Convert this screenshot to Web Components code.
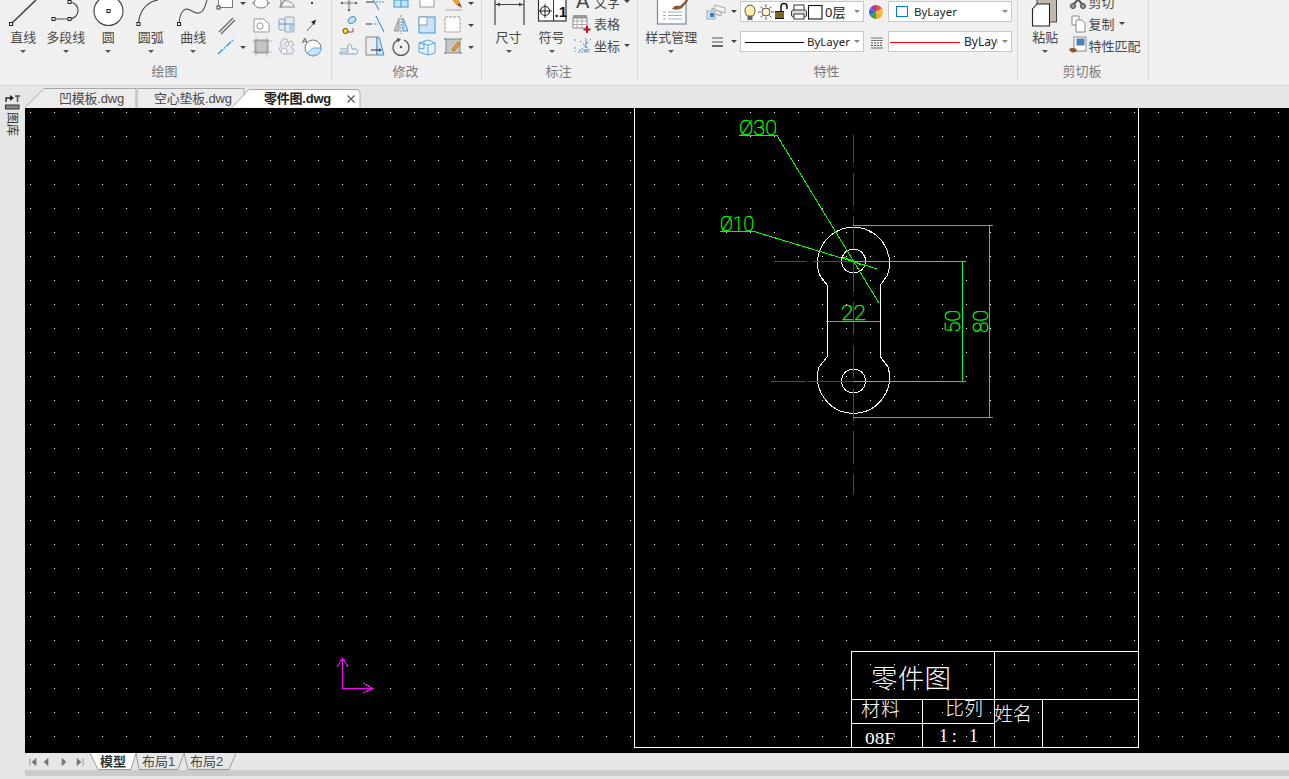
<!DOCTYPE html>
<html lang="zh"><head><meta charset="utf-8"><title>CAD</title>
<style>
html,body{margin:0;padding:0;width:1289px;height:779px;overflow:hidden;background:#e6e6e6}
body{font-family:"Noto Sans","Noto Sans CJK SC",sans-serif;font-size:13px;color:#4a4a4a}
.by{color:#222;font-size:11.5px}
</style></head><body>
<x-app>
  <x-ribbon slot="ribbon">
    <x-group title="绘图" style="width:332px">
      <div style="display:flex;padding-left:2px">
        <x-tool label="直线" icon="line"></x-tool>
        <x-tool label="多段线" icon="pline"></x-tool>
        <x-tool label="圆" icon="circle"></x-tool>
        <x-tool label="圆弧" icon="arc"></x-tool>
        <x-tool label="曲线" icon="spline"></x-tool>
        <x-grid style="--cols:22px 12px 24px 28px 22px">
          <x-ico name="rect"></x-ico><x-caret></x-caret><x-ico name="ellipse"></x-ico><x-ico name="polar"></x-ico><x-ico name="point"></x-ico>
          <x-ico name="dline"></x-ico><span></span><x-ico name="region"></x-ico><x-ico name="solid"></x-ico><x-ico name="arrow"></x-ico>
          <x-ico name="xline"></x-ico><x-caret></x-caret><x-ico name="hatch"></x-ico><x-ico name="gear"></x-ico><x-ico name="sector"></x-ico>
        </x-grid>
      </div>
    </x-group>
    <x-group title="修改" style="width:150px">
      <div style="padding-left:4px">
        <x-grid style="--cols:26px 26px 26px 26px 26px 10px">
          <x-ico name="move"></x-ico><x-ico name="trim"></x-ico><x-ico name="array"></x-ico><x-ico name="box"></x-ico><x-ico name="pencil"></x-ico><x-caret></x-caret>
          <x-ico name="fillet"></x-ico><x-ico name="extend"></x-ico><x-ico name="mirror"></x-ico><x-ico name="offset"></x-ico><x-ico name="dashbox"></x-ico><x-caret></x-caret>
          <x-ico name="stretch"></x-ico><x-ico name="trap"></x-ico><x-ico name="rotate"></x-ico><x-ico name="cubes"></x-ico><x-ico name="hatchedit"></x-ico><x-caret></x-caret>
        </x-grid>
      </div>
    </x-group>
    <x-group title="标注" style="width:156px">
      <div style="display:flex;padding-left:5px">
        <x-tool label="尺寸" icon="dim" style="width:43px"></x-tool>
        <x-tool label="符号" icon="sym" style="width:43px"></x-tool>
        <x-stack style="margin-left:-1px">
          <x-small icon="textA" label="文字" caret></x-small>
          <x-small icon="table" label="表格"></x-small>
          <x-small icon="coord" label="坐标" caret></x-small>
        </x-stack>
      </div>
    </x-group>
    <x-group title="特性" style="width:380px">
      <div style="display:flex;padding-left:12px">
        <x-tool label="样式管理" icon="style"></x-tool>
        <x-props style="margin-left:13.5px">
          <x-ico name="layers"></x-ico><x-caret></x-caret>
          <x-combo>
            <x-ico name="bulb" w="16" h="20" style="margin-left:1px"></x-ico><x-ico name="sun" w="16" h="20"></x-ico><x-ico name="lock" w="16" h="20"></x-ico><x-ico name="printer" w="18" h="20"></x-ico><x-ico name="square" w="15" h="20"></x-ico><span style="margin-left:2px;font-size:13px;color:#222">0层</span>
          </x-combo>
          <x-ico name="wheel" w="24"></x-ico>
          <x-combo>
            <x-ico name="bluebox" w="25" h="20"></x-ico><span class="by">ByLayer</span>
          </x-combo>
          <x-ico name="lweight"></x-ico><x-caret></x-caret>
          <x-combo>
            <x-ico name="blackline" w="66" h="20"></x-ico><span class="by">ByLayer</span>
          </x-combo>
          <x-ico name="ltype" w="24"></x-ico>
          <x-combo>
            <x-ico name="redline" w="75" h="20"></x-ico><span class="by" style="font-size:12px">ByLayer</span>
          </x-combo>
        </x-props>
      </div>
    </x-group>
    <x-group title="剪切板" style="width:131px">
      <div style="display:flex;padding-left:6px">
        <x-tool label="粘贴" icon="paste"></x-tool>
        <x-stack>
          <x-small icon="cut" label="剪切"></x-small>
          <x-small icon="copy" label="复制" caret></x-small>
          <x-small icon="match" label="特性匹配"></x-small>
        </x-stack>
      </div>
    </x-group>
  </x-ribbon>
  <x-sidebar slot="side"></x-sidebar>
  <x-tabs slot="tabs">
    <x-tab w="112" pad="34">凹模板.dwg</x-tab>
    <x-tab w="108" pad="17">空心垫板.dwg</x-tab>
    <x-tab w="129" pad="32" active style="margin-left:-13px">零件图.dwg</x-tab>
  </x-tabs>
  <x-canvas slot="canvas"></x-canvas>
  <x-layouts slot="layouts"></x-layouts>
</x-app>
<script>
const G='#6f6f6f',B='#3a97dd',L='#c9e4f8';
const sq=(x,y,s=3,c='#222')=>`<rect x="${x-s/2}" y="${y-s/2}" width="${s}" height="${s}" fill="#fff" stroke="${c}"/>`;
const ICONS={
line:`<path d="M9 24L34 0" stroke="#444" stroke-width="1.6"/>${sq(9,24)}`,
pline:`<path d="M8.5 19H24.5A8.5 8.5 0 0 0 24.5 2" fill="none" stroke="#444" stroke-width="1.1"/>${sq(8.5,19)}${sq(24.5,19)}${sq(24.5,2)}`,
circle:`<circle cx="21.5" cy="11" r="14.5" fill="#fff" stroke="#444" stroke-width="1.1"/>${sq(21.5,11)}`,
arc:`<path d="M8.5 24C9 12 16 2 28 0" fill="none" stroke="#444" stroke-width="1.2"/>${sq(8.5,24)}`,
spline:`<path d="M7 24C8 9 14 7 20 11C28 16 32 12 35 0" fill="none" stroke="#555" stroke-width="1.1"/>${sq(7,24)}`,
rect:`<rect x="3.5" y="1" width="14" height="14.5" fill="#fff" stroke="#777"/>${sq(3.5,15.5,3,'#444')}`,
ellipse:`<ellipse cx="11" cy="11" rx="7" ry="5" fill="#fff" stroke="#777"/><path d="M2 11h2M18 11h2" stroke="#777"/>`,
polar:`<path d="M5 16V4M3 15H19M5 14C5 6 15 8 18 14" fill="none" stroke="#888"/><path d="M5 14L11 4" stroke="#888"/>`,
point:`<rect x="10" y="10" width="2" height="2" fill="#444"/>`,
dline:`<path d="M4 18L18 4M6 20L20 6" stroke="#666" stroke-width="1.3"/>`,
region:`<path d="M4 5H14L19 10V18H4Z" fill="#fff" stroke="#999"/><circle cx="10" cy="12" r="3.2" fill="none" stroke="#999"/>`,
solid:`<rect x="3" y="5" width="6" height="11" rx="1" fill="#e6edf4" stroke="#9aa8b6"/><rect x="9" y="3" width="9" height="15" rx="1" fill="#e6ebf1" stroke="#9aa8b6"/><rect x="13" y="11" width="5" height="7" fill="#b5cce4"/><path d="M3 10H18" stroke="#4a98d8"/>`,
arrow:`<path d="M6 17L12 10" stroke="#666"/><path d="M10 8L15 5.5L13.5 11Z" fill="#222"/>`,
xline:`<path d="M3 18L18 4" stroke="${B}" stroke-width="1.4" stroke-dasharray="7 1 2 1"/>`,
hatch:`<rect x="5" y="4" width="13" height="13" fill="#c6c6c6" stroke="#999"/><path d="M2 5h20M2 16h20M6 1v20M17 1v20" stroke="#888" stroke-width=".5"/>`,
gear:`<path d="M7 3h4l1 3 4-1 2 4-3 2 3 3-2 4H7L5 16l-2-4 3-2-2-3z" fill="#e8ebf0" stroke="#aab2bb"/><circle cx="8" cy="15" r="3" fill="#fff" stroke="#aab2bb"/><circle cx="11" cy="8" r="2" fill="#fff" stroke="#aab2bb"/>`,
sector:`<circle cx="12" cy="12" r="8" fill="#fff" stroke="#777"/><path d="M12 12H20A8 8 0 0 1 6 17Z" fill="${L}" stroke="#6ab0e4"/><text x="1" y="7" font-size="8" fill="#444" font-family="Liberation Sans">A</text>`,
move:`<path d="M11 3V19M3 11H19" stroke="#888"/><circle cx="11" cy="11" r="2" fill="#999"/><path d="M9.5 5l1.5-3 1.5 3zM9.5 17l1.5 3 1.5-3zM5 9.5l-3 1.5 3 1.5zM17 9.5l3 1.5-3 1.5z" fill="#666"/>`,
trim:`<path d="M2 10H10" stroke="#555" stroke-width="1.2"/><path d="M12 10H20" stroke="${B}" stroke-dasharray="2 1"/><path d="M6 2L15 18" stroke="${B}" stroke-width="1.1"/>`,
array:`<rect x="4" y="1" width="14" height="14" fill="${L}" stroke="${B}"/><rect x="5" y="2" width="5" height="6" fill="#fff"/><path d="M11 1V15M4 8H18" stroke="${B}"/>`,
box:`<rect x="4" y="2" width="14" height="13" fill="#fff" stroke="#999"/>`,
pencil:`<path d="M5 1L15 13L18 11L8 -1Z" fill="#f0a830" stroke="#d08820"/><path d="M15 13l3-2 2 5z" fill="#8a4a30"/><path d="M3 18H20" stroke="#aaa"/>`,
fillet:`<circle cx="7.5" cy="17" r="2.5" fill="#ffe000" stroke="#444"/><ellipse cx="14" cy="6" rx="4" ry="3" fill="${L}" stroke="${B}" transform="rotate(-35 14 6)"/><path d="M10 18H15V14" fill="none" stroke="#a44"/>`,
extend:`<path d="M2 10H8" stroke="#555" stroke-width="1.2"/><path d="M10 10H14" stroke="${B}" stroke-dasharray="2 1"/><path d="M12 2L20 18" stroke="${B}" stroke-width="1.1"/>`,
mirror:`<path d="M9 4L4 17H9Z" fill="#c4c4c4" stroke="#999"/><path d="M13 4L18 17H13Z" fill="${L}" stroke="${B}"/><path d="M11 1V20" stroke="#888" stroke-dasharray="2 1"/>`,
offset:`<rect x="3" y="3" width="16" height="16" fill="${L}" stroke="${B}"/><rect x="3" y="3" width="8" height="8" fill="#fff" stroke="#999"/>`,
dashbox:`<rect x="3" y="3" width="15" height="15" fill="#fff" stroke="#999" stroke-dasharray="3 1"/>`,
stretch:`<path d="M2 16H10C10 12 9 9 11 8C13 7 14 11 14 13H18C20 13 20 18 18 18H2Z" fill="#f2f4fa" stroke="#7f9fbc"/><path d="M2 13H9" stroke="#7f9fbc"/>`,
trap:`<rect x="2" y="1" width="11" height="18" fill="#ececec" stroke="#888"/><path d="M13 1H15L20 19H13Z" fill="${L}" stroke="${B}"/><path d="M7 14H16" stroke="#333"/><path d="M15 12.5l3 1.5-3 1.5z" fill="#333"/>`,
rotate:`<path d="M8 4A8 8 0 1 0 14 4" fill="none" stroke="#555" stroke-width="1.2"/><path d="M6.5 2l4.5 1-3 3.5z" fill="#555"/><circle cx="11" cy="11" r="1.2" fill="#555"/>`,
cubes:`<path d="M3 7L12 4L19 7V17L12 19L3 16Z" fill="#e8f3fc" stroke="#5aa4dc"/><path d="M3 7L12 9V19M12 9L19 7M8 5V13L3 12" fill="none" stroke="#5aa4dc"/>`,
hatchedit:`<rect x="4" y="3" width="14" height="14" fill="#c6c6c6" stroke="#888"/><path d="M2 3h2M2 17h2M18 3h2M18 17h2" stroke="#666"/><path d="M10 14L16 6L18 8L12 15Z" fill="#f0a830" stroke="#a06a20"/>`,
dim:`<path d="M7 0V25M36 0V25" stroke="#444" stroke-width="1.2"/><path d="M7 4.5H36" stroke="#444"/><path d="M8 4.5l4-2v4zM35 4.5l-4-2v4z" fill="#444"/>`,
sym:`<rect x="7.5" y="-1" width="27.5" height="22" fill="#fff" stroke="#333" stroke-width="1.2"/><path d="M22.5 -1V21" stroke="#333"/><circle cx="14" cy="11" r="4.5" fill="none" stroke="#222" stroke-width="1.2"/><path d="M7 11H21M14 4V18" stroke="#222"/><text x="23.5" y="17" font-size="15" font-weight="700" fill="#111" font-family="Liberation Sans">.1</text>`,
style:`<rect x="7.5" y="-2" width="28.5" height="26" fill="#fff" stroke="#7a93aa" stroke-width="1.3"/><path d="M13 12H16M18 12H32M13 15.5H16M18 15.5H32M13 19H16M18 19H32" stroke="#9cb2c6"/><path d="M22 9C24 5 28 5 30 6L37 -1L38 1L32 8C29 10 25 10 22 9Z" fill="#8a5a34"/>`,
textA:`<text x="4" y="17" font-size="20" fill="#444" font-family="Liberation Sans">A</text>`,
table:`<rect x="1" y="2" width="14" height="3" fill="#999"/><rect x="1" y="5" width="14" height="10" fill="#fff" stroke="#888"/><path d="M1 8H15M1 11.5H15M5 5V15M10 5V15" stroke="#aaa"/><path d="M15 13V20M11.5 16.5H18.5" stroke="#c01020" stroke-width="2"/>`,
coord:`<path d="M3 5V9M3 13V18M7 16H19M14 4V18M8 7L18 16M19 5L9 16" stroke="${B}" stroke-dasharray="2 2" fill="none"/><path d="M6 18H18M14 6V18" stroke="#888" stroke-dasharray="2 1"/>`,
layers:`<path d="M9 4L19 7V12L9 9Z" fill="#f4f4f4" stroke="#aaa"/><path d="M6 7L15 11V15L6 12Z" fill="#e8e8e8" stroke="#aaa"/><rect x="1" y="10" width="8" height="8" fill="#d7e4f0" stroke="#9ab"/><rect x="4" y="12" width="4" height="4" fill="#3a7ec0"/>`,
bulb:`<path d="M5 14C2 10 2 4 8 3C14 4 14 10 11 14Z" fill="#ffefae" stroke="#555"/><rect x="5.5" y="14" width="5" height="4" fill="#666"/>`,
sun:`<circle cx="8" cy="10" r="4" fill="#fff5c8" stroke="#555"/><path d="M8 2V5M8 15V18M0 10H3M13 10H16M2.5 4.5L4.5 6.5M11.5 13.5L13.5 15.5M13.5 4.5L11.5 6.5M4.5 13.5L2.5 15.5" stroke="#555"/>`,
lock:`<rect x="1" y="9" width="9" height="8" fill="#111"/><path d="M1 11H10M1 13H10M1 15H10" stroke="#d8c428"/><path d="M7 9V4.5A3 3 0 0 1 13 4.5V7" fill="none" stroke="#111" stroke-width="1.5"/>`,
printer:`<rect x="4" y="3" width="10" height="6" fill="#fff" stroke="#333"/><rect x="1.5" y="8" width="15" height="7" rx="2" fill="#ddd" stroke="#333"/><rect x="4" y="12" width="10" height="5" fill="#fff" stroke="#333"/>`,
square:`<rect x=".5" y="3.5" width="13.5" height="13.5" fill="#fff" stroke="#111" stroke-width="1.1"/>`,
wheel:`<g transform="translate(12 11)"><path d="M0 0V-7A7 7 0 0 1 6 -3.5Z" fill="#e8503a"/><path d="M0 0L6 -3.5A7 7 0 0 1 6 3.5Z" fill="#f0c030"/><path d="M0 0L6 3.5A7 7 0 0 1 0 7Z" fill="#e8b020"/><path d="M0 0V7A7 7 0 0 1 -6 3.5Z" fill="#38a848"/><path d="M0 0L-6 3.5A7 7 0 0 1 -6 -3.5Z" fill="#3068c8"/><path d="M0 0L-6 -3.5A7 7 0 0 1 0 -7Z" fill="#a038b8"/></g>`,
bluebox:`<rect x="7.5" y="4.5" width="11" height="10" fill="#fff" stroke="#0a7ad0" stroke-width="1.1"/>`,
lweight:`<path d="M6 7H17M6 11H17" stroke="#555"/><path d="M6 15H17" stroke="#444" stroke-width="1.6"/>`,
ltype:`<path d="M7 7H19M7 9.5H19" stroke="#777"/><path d="M7 12H19M7 14.5H19" stroke="#555" stroke-dasharray="2 1"/><path d="M7 17H19" stroke="#666"/>`,
blackline:`<path d="M4 10.5H63" stroke="#000" stroke-width="1"/>`,
redline:`<path d="M1 10.5H71" stroke="#f00" stroke-width="1"/>`,
paste:`<rect x="13" y="-2" width="19.5" height="24" fill="#c2baae" stroke="#444"/><path d="M8.5 9L13 4H25.5V26H8.5Z" fill="#fff" stroke="#222" stroke-width="1.1"/>`,
cut:`<path d="M6 3L16 14M16 3L6 14" stroke="#555" stroke-width="2"/><circle cx="6" cy="15" r="2.5" fill="#999" stroke="#444"/><circle cx="16" cy="15" r="2.5" fill="#999" stroke="#444"/>`,
copy:`<path d="M5 3H12V12H5Z" fill="#fff" stroke="#888"/><path d="M9 7H15L18 10V19H9Z" fill="#fff" stroke="#888"/>`,
match:`<rect x="7" y="3" width="12" height="14" fill="#fff" stroke="#888"/><rect x="9.5" y="4.5" width="8" height="7" fill="#4a82b8"/><path d="M2 15C5 13 9 14 10 16C8 20 3 19 2 15Z" fill="#8a5a34"/>`
};
function sh(el,css,html){const r=el.attachShadow({mode:'open'});r.innerHTML=`<style>${css}</style>${html}`;return r}
function def(n,f){customElements.define(n,class extends HTMLElement{connectedCallback(){if(!this.shadowRoot)f(this)}})}
def('x-ico',e=>{const w=e.getAttribute('w')||22,h=e.getAttribute('h')||22;
  sh(e,`:host{display:block;width:${w}px;height:${h}px;flex:none}svg{display:block;overflow:visible}`,
  `<svg xmlns="http://www.w3.org/2000/svg" width="${w}" height="${h}" viewBox="0 0 ${w} ${h}">${ICONS[e.getAttribute('name')]||''}</svg>`)});
def('x-caret',e=>sh(e,`:host{display:flex;align-items:center;justify-content:center;height:100%;min-width:10px}i{display:block;width:0;height:0;border:3px solid transparent;border-top:3.5px solid var(--caret,#444);border-bottom:0}`,`<i></i>`));
def('x-app',e=>sh(e,`:host{display:grid;width:1289px;height:779px;grid-template-columns:25px 1264px;grid-template-rows:86px 22px 645px 17px 6px 3px}
  ::slotted([slot=ribbon]){grid-column:1/3}
  ::slotted([slot=side]){grid-column:1;grid-row:2/7}
  ::slotted([slot=layouts]){grid-column:2;grid-row:4/7}`,
  `<slot name="ribbon"></slot><slot name="side"></slot><slot name="tabs"></slot><slot name="canvas"></slot><slot name="layouts"></slot>`));
def('x-ribbon',e=>sh(e,`:host{display:flex;height:85px;background:#f0f0f0;border-bottom:1px solid #d6d6d6;overflow:hidden;color:#4a4a4a}`,`<slot></slot>`));
def('x-group',e=>sh(e,`:host{display:flex;flex-direction:column;height:81px;flex:none;box-sizing:border-box;border-right:1px solid #d8d8d8}
  .b{height:62px}.t{height:19px;line-height:19px;text-align:center;color:#7a7a7a;font-size:13px;padding-right:2px}`,
  `<div class="b"><slot></slot></div><div class="t">${e.getAttribute('title')}</div>`));
def('x-tool',e=>sh(e,`:host{display:flex;flex-direction:column;align-items:center;width:42.5px;flex:none}
  .l{height:18px;line-height:18px;white-space:nowrap;font-size:13px;color:#4a4a4a;margin-top:0}.c{height:3px;margin-top:3.5px;--caret:#555}`,
  `<x-ico name="${e.getAttribute('icon')}" w="42" h="28"></x-ico><div class="l">${e.getAttribute('label')}</div><div class="c"><x-caret></x-caret></div>`));
def('x-grid',e=>sh(e,`:host{display:grid;grid-template-columns:var(--cols);grid-auto-rows:22px;margin-top:-8px;flex:none;justify-items:center;align-items:center}`,`<slot></slot>`));
def('x-stack',e=>sh(e,`:host{display:flex;flex-direction:column;margin-top:-9px;flex:none}`,`<slot></slot>`));
def('x-small',e=>sh(e,`:host{display:flex;align-items:center;height:21.7px;white-space:nowrap;font-size:13px;color:#4a4a4a}
  .c{margin-left:2px;height:100%}`,
  `<x-ico name="${e.getAttribute('icon')}"></x-ico><span>${e.getAttribute('label')}</span>${e.hasAttribute('caret')?'<div class="c"><x-caret></x-caret></div>':''}`));
def('x-props',e=>sh(e,`:host{display:grid;grid-template-columns:22px 12px 124px 24px 124px;grid-template-rows:21px 21px;row-gap:9px;margin-top:1px;align-items:center;justify-items:center;flex:none}`,`<slot></slot>`));
def('x-combo',e=>sh(e,`:host{display:flex;align-items:center;box-sizing:border-box;width:124px;height:21px;background:#fff;border:1px solid #c8c8c8;font-size:12px;justify-self:stretch}
  .i{display:flex;align-items:center;flex:1;min-width:0;overflow:hidden;white-space:nowrap;height:100%}
  .c{width:13px;flex:none;height:100%;--caret:#888}`,
  `<div class="i"><slot></slot></div><div class="c"><x-caret></x-caret></div>`));
def('x-sidebar',e=>sh(e,`:host{display:block;background:#e6e6e6;padding:9px 0 0 5px;color:#333}
  svg{display:block}.t{writing-mode:vertical-rl;text-orientation:sideways;font-size:12px;line-height:14px;margin-top:2px;color:#333;width:14px}`,
  `<svg width="15" height="15" viewBox="0 0 15 15"><path d="M1 7V3H6" fill="none" stroke="#222" stroke-width="1.3"/><path d="M5 0l4 3-4 3z" fill="#222"/><path d="M10 1H15M12.5 1V7" stroke="#555" stroke-width="1.5"/><rect x=".5" y="10" width="13.5" height="4" fill="#888" stroke="#333"/></svg><div class="t">图库</div>`));
def('x-tabs',e=>sh(e,`:host{display:flex;height:22px;background:#e6e6e6;position:relative}`,`<slot></slot>`));
def('x-tab',e=>{const w=+e.getAttribute('w'),p=e.getAttribute('pad'),a=e.hasAttribute('active');
  const d=a?`M0 21.5L17 3.5H${w-5}Q${w-1} 3.5 ${w-1} 7V21.5`:`M0 21.5L${p>20?19:0} 2.5H${w-1}V21.5`;
  sh(e,`:host{display:flex;align-items:center;position:relative;box-sizing:border-box;width:${w}px;height:22px;padding-left:${p}px;flex:none;white-space:nowrap;font-family:"Liberation Sans","Noto Sans CJK SC",sans-serif;font-size:13px;letter-spacing:-.22px;color:${a?'#222':'#4a4a4a'};font-weight:${a?700:400};${a?'z-index:2;':''}}
  svg{position:absolute;left:0;top:0}span{position:relative}.x{position:absolute;left:115px;top:9px}`,
  `<svg width="${w}" height="22"><path d="${d}" fill="${a?'#fff':'#ececec'}" stroke="#a8a8a8"/></svg><span><slot></slot></span>${a?'<svg class="x" width="8" height="8"><path d="M.5 .5L7.5 7.5M7.5 .5L.5 7.5" stroke="#555" stroke-width="1.2"/></svg>':''}`)});
def('x-canvas',e=>{
  const F="Roboto,'Liberation Sans',sans-serif",C="'Liberation Serif','Noto Sans CJK SC',serif",S="'Noto Sans CJK SC',sans-serif";
  sh(e,`:host{display:block;width:1264px;height:645px;background:#000}svg{display:block}`,
  `<svg xmlns="http://www.w3.org/2000/svg" width="1264" height="645" viewBox="25 108 1264 645">
  <defs><pattern id="d" x="30" y="112" width="24" height="24" patternUnits="userSpaceOnUse"><rect width="1" height="1" fill="#fff"/></pattern></defs>
  <rect x="25" y="108" width="1264" height="645" fill="#000"/><rect x="25" y="108" width="1264" height="645" fill="url(#d)"/>
  <g fill="none" stroke="#fff" shape-rendering="crispEdges">
    <path d="M634.5 108V747.5H1138.5V108"/>
    <path d="M851.5 747V651.5H1138M851 699.5H1138M994.5 651V747M922.5 699V747M851 723.5H994M1042.5 699V747"/>
    <path d="M827 285L819.5 275A36 36 0 1 1 887.5 275L880.5 285V357L888 367A36 36 0 1 1 819 367L827 357Z"/>
    <circle cx="853.5" cy="261" r="12"/><circle cx="853.5" cy="381" r="12"/>
  </g>
  <g fill="none" stroke="#f00" shape-rendering="crispEdges">
    <path d="M853.5 135V495" stroke-dasharray="33 3 1 6" stroke-dashoffset="5"/>
    <path d="M774 261.5H807M813 261.5H853M771 381.5H806M808 381.5H853"/>
  </g>
  <g fill="none" stroke="#0f0" shape-rendering="crispEdges">
    <path d="M853 225.5H993M853 417.5H993M989.5 225V417M853 261.5H966M853 381.5H966M962.5 261V381M826 321.5H880M739 135.5H777M720 231.5H754"/>
    <path d="M777 135.5L878.7 302.6M754 231.5L876.7 268.7"/>
    <path d="M853.5 261L843 257M853.5 261L861 265"/>
  </g>
  <g fill="#0f0" stroke="#0f0" stroke-width=".4" font-family="${F}" font-weight="100">
    <text x="739" y="134.5" font-size="20" textLength="38" lengthAdjust="spacingAndGlyphs">Ø30</text>
    <text x="720" y="230.5" font-size="20" textLength="34" lengthAdjust="spacingAndGlyphs">Ø10</text>
    <text x="841" y="320" font-size="21" textLength="25" lengthAdjust="spacingAndGlyphs">22</text>
    <text transform="translate(960 333) rotate(-90)" font-size="20" textLength="23" lengthAdjust="spacingAndGlyphs">50</text>
    <text transform="translate(988 333) rotate(-90)" font-size="20" textLength="23" lengthAdjust="spacingAndGlyphs">80</text>
  </g>
  <g fill="#fff" font-family="${S}" font-weight="300">
    <text x="871" y="688" font-size="26.5" textLength="80">零件图</text>
    <text x="861" y="716" font-size="19" textLength="39">材料</text>
    <text x="945" y="715" font-size="19" textLength="38">比列</text>
    <text x="994" y="721" font-size="19" textLength="38">姓名</text>
  </g>
  <g fill="#fff" font-family="${C}">
    <text x="865" y="744" font-size="17" textLength="30" lengthAdjust="spacingAndGlyphs">08F</text>
    <text x="939" y="742" font-size="18" textLength="39">1: 1</text>
  </g>
  <g fill="none" stroke="#f0f" shape-rendering="crispEdges">
    <path d="M342.5 659V688.5H372M337 667L342.5 658L348 667M363 683L373 688.5L363 693"/>
  </g></svg>`)});
def('x-layouts',e=>{
  const t=(d,f)=>`<path d="${d}" fill="${f}" stroke="#9a9a9a"/>`;
  sh(e,`:host{display:block;background:#e6e6e6;position:relative}
  .s{display:flex;height:17px;font-family:"Liberation Sans","Noto Sans CJK SC",sans-serif;font-size:13px;color:#4a4a4a}
  .n{width:65px;box-sizing:border-box;flex:none;display:flex;align-items:center;padding-left:2px}
  .n svg{display:block}
  .p{position:relative;display:flex;align-items:center;height:17px;flex:none}
  .p svg{position:absolute;left:0;top:0}.p span{position:relative;line-height:17px;white-space:nowrap}
  .b{height:6px;background:#cbcbcb}`,
  `<div class="s"><div class="n"><svg width="60" height="10" viewBox="0 0 60 10"><path d="M3 1.5V8.5M9 1.5L5 5L9 8.5ZM21 1.5L17 5L21 8.5ZM35 1.5L39 5L35 8.5ZM50 1.5L54 5L50 8.5ZM56 1.5V8.5" fill="#777" stroke="#777" stroke-width=".7"/></svg></div>
  <div class="p" style="width:46px;padding-left:10px;box-sizing:border-box;font-weight:700;color:#333"><svg width="46" height="17"><path d="M0 0L8 16.5H41L46 0" fill="#fff" stroke="#9a9a9a"/></svg><span>模型</span></div>
  <div class="p" style="width:48px;padding-left:6px;box-sizing:border-box"><svg width="52" height="17">${t('M0 0L3 16.5H42L48 0','#e6e6e6')}</svg><span>布局1</span></div>
  <div class="p" style="width:52px;padding-left:6px;box-sizing:border-box"><svg width="54" height="17">${t('M0 0L4 16.5H45L52 0','#e6e6e6')}</svg><span>布局2</span></div>
  </div><div class="b"></div>`)});
</script>
</body></html>
